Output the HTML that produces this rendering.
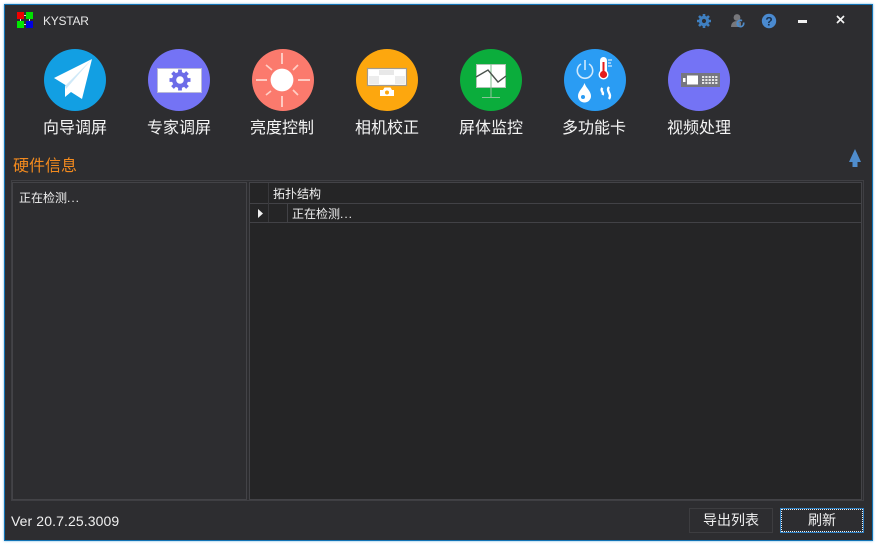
<!DOCTYPE html>
<html lang="zh">
<head>
<meta charset="utf-8">
<title>KYSTAR</title>
<style>
html,body{margin:0;padding:0;width:876px;height:544px;overflow:hidden;background:#fff}
body{font-family:"Liberation Sans","Noto Sans CJK SC",sans-serif;color:#fff;position:relative}
.a{position:absolute}
#win{left:4px;top:4px;width:867px;height:535px;background:#2d2d30;border:1px solid #1273b5;box-shadow:0 0 2px #6fb0dc}
.lbl{position:absolute;top:119px;width:90px;text-align:center;font-size:16px;line-height:20px;color:#f4f4f4}
.ic{position:absolute;top:49px;width:62px;height:62px}
.line{position:absolute;background:#424246}
.t12{position:absolute;font-size:12px;line-height:16px;color:#f0f0f0;white-space:nowrap}
.t12 i{font-style:normal;letter-spacing:1px}
.btn{position:absolute;top:508px;height:25px;box-sizing:border-box;font-size:14px;line-height:23px;text-align:center;color:#f0f0f0;background:#2d2d30}
</style>
</head>
<body>
<div id="win" class="a"></div>

<!-- logo -->
<svg class="a" style="left:16px;top:11px" width="19" height="19" viewBox="0 0 19 19">
<rect x="8" y="4" width="2" height="1" fill="#ddd"/><rect x="4" y="8" width="1" height="2" fill="#ddd"/><rect x="13" y="8" width="1" height="2" fill="#ddd"/><rect x="8" y="13" width="2" height="1" fill="#ddd"/>
<rect x="1" y="1" width="7" height="7" fill="#f00000"/><rect x="10" y="1" width="7" height="7" fill="#00e000"/><rect x="1" y="10" width="7" height="7" fill="#00e800"/><rect x="10" y="10" width="7" height="7" fill="#0000e0"/>
</svg>
<div class="a" style="left:43px;top:13px;font-size:12px;line-height:16px;color:#e8e8e8;letter-spacing:-.25px">KYSTAR</div>

<!-- title icons -->
<svg class="a" style="left:696px;top:13px" width="16" height="16" viewBox="0 0 16 16">
<g fill="#3f7fc0"><circle cx="8" cy="8" r="5.2"/><g stroke="#3f7fc0" stroke-width="2.6"><path d="M8 1v14M1 8h14M3 3l10 10M13 3L3 13"/></g></g><circle cx="8" cy="8" r="2.1" fill="#2d2d30"/>
</svg>
<svg class="a" style="left:729px;top:13px" width="17" height="16" viewBox="0 0 17 16">
<circle cx="8" cy="4.5" r="3.4" fill="#77777b"/><path d="M2 14c0-4 2.500-6 6-6s4 1 4 2v4z" fill="#77777b"/>
<path d="M14.500 9.500a3.200 3.200 0 1 1-1.500-1.800M8.500 11l2 0" fill="none" stroke="#4d8ac8" stroke-width="1.700"/>
</svg>
<svg class="a" style="left:761px;top:13px" width="16" height="16" viewBox="0 0 16 16">
<circle cx="8" cy="8" r="7.200" fill="#4a8ad0"/>
<text x="8" y="12.500" text-anchor="middle" font-size="12" font-weight="bold" font-family="Liberation Sans" fill="#17304e">?</text>
</svg>
<div class="a" style="left:798px;top:20px;width:9px;height:3px;background:#f2f2f2"></div>
<svg class="a" style="left:836px;top:15px" width="9" height="9" viewBox="0 0 9 9"><path d="M1 1l7 7M8 1L1 8" stroke="#f4f4f4" stroke-width="1.700"/></svg>

<!-- 1 paper plane -->
<svg class="ic" style="left:44px" viewBox="0 0 62 62">
<circle cx="31" cy="31" r="31" fill="#129fe3"/>
<path d="M48 10L10 29l13 8z" fill="#fff"/>
<path d="M48 10L21 37v11l6-5 11 7z" fill="#fff"/>
<path d="M48 10L21 37l1 3z" fill="#cfe9f8"/>
</svg>
<!-- 2 expert -->
<svg class="ic" style="left:148px" viewBox="0 0 62 62">
<circle cx="31" cy="31" r="31" fill="#7473f5"/>
<rect x="9.500" y="19.500" width="44" height="24" fill="#fff" stroke="#b9b9d8" stroke-width="1"/>
<g stroke="#6d6ce8" stroke-width="3.800"><path d="M32 20.500v21M21.500 31h21M24.500 23.500l15 15M39.500 23.500l-15 15"/></g>
<circle cx="32" cy="31" r="8" fill="#6d6ce8"/><circle cx="32" cy="31" r="3.800" fill="#fff"/>
</svg>
<!-- 3 sun -->
<svg class="ic" style="left:252px" viewBox="0 0 62 62">
<circle cx="31" cy="31" r="31" fill="#fb7a6d"/>
<circle cx="30" cy="31" r="11.400" fill="#fff"/>
<g stroke="#ffd8d0" stroke-width="1.700"><path d="M30 4v11M30 47v11M4 31h11M46 31h12"/></g>
<g stroke="#ffcfc6" stroke-width="1.700"><path d="M14 16l6 5M46 16l-5 5M14 46l5-4M46 46l-5-5"/></g>
</svg>
<!-- 4 camera -->
<svg class="ic" style="left:356px" viewBox="0 0 62 62">
<circle cx="31" cy="31" r="31" fill="#fda70e"/>
<rect x="11.500" y="19.500" width="39" height="17" fill="#fff" stroke="#a39a8c" stroke-width="1.200"/>
<rect x="23" y="21" width="15" height="5" fill="#e8e8e8"/><rect x="13" y="27" width="10" height="8" fill="#ececec"/><rect x="39" y="27" width="10" height="8" fill="#ececec"/>
<path d="M24 41h3l1.500-2.500h6L36 41h2v6h-14z" fill="#fff"/><circle cx="31" cy="43.500" r="2" fill="#fda70e"/>
</svg>
<!-- 5 monitor -->
<svg class="ic" style="left:460px" viewBox="0 0 62 62">
<circle cx="31" cy="31" r="31" fill="#0bad3c"/>
<rect x="16.500" y="15.500" width="29" height="23" fill="#fff" stroke="#b0c4b5" stroke-width="1"/>
<path d="M31 15v33M22 48.500h18" stroke="#8ac398" stroke-width="1.100" fill="none"/>
<path d="M16 28l12-7 10 12 8-6" stroke="#4a534d" stroke-width="1.400" fill="none"/>
</svg>
<!-- 6 multifunction -->
<svg class="ic" style="left:564px" viewBox="0 0 62 62">
<circle cx="31" cy="31" r="31" fill="#2a9cf3"/>
<path d="M17 15a7.700 7.700 0 1 0 8 0M21 11v10" fill="none" stroke="#cfe9fd" stroke-width="1.600"/>
<rect x="36" y="8" width="7" height="19" rx="3.500" fill="#fff"/><circle cx="39.500" cy="25.500" r="5" fill="#fff"/><circle cx="39.500" cy="25.500" r="3.600" fill="#e31b1b"/><rect x="38.500" y="13" width="2" height="11" fill="#e31b1b"/>
<path d="M44 11h4M44 14h3M44 17h4" stroke="#cfe9fd" stroke-width="1.200"/>
<path d="M20.500 34c-1.500 5-6.500 8-6.500 13a6.500 6.500 0 0 0 13 0c0-5-5-8-6.500-13z" fill="#fff"/><circle cx="19" cy="48" r="2" fill="#2a9cf3"/>
<path d="M38.500 39c-3 3 2 4 0 7M45 38c-3.500 4 3.500 7 0 12" fill="none" stroke="#fff" stroke-width="2.400"/>
</svg>
<!-- 7 video -->
<svg class="ic" style="left:668px" viewBox="0 0 62 62">
<circle cx="31" cy="31" r="31" fill="#7473f5"/>
<rect x="13" y="24" width="39" height="14" fill="#77777f"/>
<rect x="15" y="29" width="2.500" height="4" fill="#fff"/><rect x="19" y="26.500" width="11" height="9" fill="#fff"/>
<g fill="#e6e6e6"><rect x="34" y="27" width="2.200" height="2"/><rect x="37.300" y="27" width="2.200" height="2"/><rect x="40.600" y="27" width="2.200" height="2"/><rect x="43.900" y="27" width="2.200" height="2"/><rect x="47.200" y="27" width="2.200" height="2"/><rect x="34" y="30" width="2.200" height="2"/><rect x="37.300" y="30" width="2.200" height="2"/><rect x="40.600" y="30" width="2.200" height="2"/><rect x="43.900" y="30" width="2.200" height="2"/><rect x="47.200" y="30" width="2.200" height="2"/><rect x="34" y="33" width="2.200" height="2"/><rect x="37.300" y="33" width="2.200" height="2"/><rect x="40.600" y="33" width="2.200" height="2"/><rect x="43.900" y="33" width="2.200" height="2"/><rect x="47.200" y="33" width="2.200" height="2"/></g>
</svg>

<div class="lbl" style="left:30px">向导调屏</div>
<div class="lbl" style="left:134px">专家调屏</div>
<div class="lbl" style="left:237px">亮度控制</div>
<div class="lbl" style="left:342px">相机校正</div>
<div class="lbl" style="left:446px">屏体监控</div>
<div class="lbl" style="left:549px">多功能卡</div>
<div class="lbl" style="left:654px">视频处理</div>

<div class="a" style="left:13px;top:157px;font-size:16px;line-height:20px;color:#f28a1e">硬件信息</div>
<svg class="a" style="left:848px;top:148px" width="14" height="20" viewBox="0 0 14 20"><path d="M7 1l6 13H9.500v5h-5v-5H1z" fill="#4f8ccc"/></svg>

<!-- panels -->
<div class="a" style="left:11px;top:180px;width:853px;height:321px;box-sizing:border-box;border:1px solid #3f3f43"></div>
<div class="a" style="left:12px;top:182px;width:235px;height:318px;box-sizing:border-box;border:1px solid #434347;background:#2d2d30"></div>
<div class="a" style="left:249px;top:182px;width:613px;height:318px;box-sizing:border-box;border:1px solid #434347;background:#252526"></div>
<div class="line" style="left:250px;top:203px;width:611px;height:1px"></div>
<div class="line" style="left:250px;top:222px;width:611px;height:1px"></div>
<div class="line" style="left:268px;top:183px;width:1px;height:39px;background:#39393c"></div>
<div class="line" style="left:287px;top:204px;width:1px;height:18px"></div>

<div class="t12" style="left:19px;top:190px">正在检测<i>...</i></div>
<div class="t12" style="left:273px;top:186px">拓扑结构</div>
<div class="t12" style="left:292px;top:206px">正在检测<i>...</i></div>
<svg class="a" style="left:258px;top:209px" width="5" height="9" viewBox="0 0 5 9"><path d="M0 0l5 4.500-5 4.500z" fill="#f0f0f0"/></svg>

<!-- footer -->
<div class="a" style="left:11px;top:512px;font-size:14px;line-height:18px;color:#f0f0f0;white-space:nowrap;letter-spacing:.1px">Ver 20.7.25.3009</div>
<div class="btn" style="left:689px;width:84px;border:1px solid #3d3d40">导出列表</div>
<div class="btn" style="left:780px;width:84px;border:1px solid #2f7fc0"><div style="position:absolute;left:0;top:0;right:0;bottom:0;border:1px dotted #f2f2f2"></div>刷新</div>
</body>
</html>
